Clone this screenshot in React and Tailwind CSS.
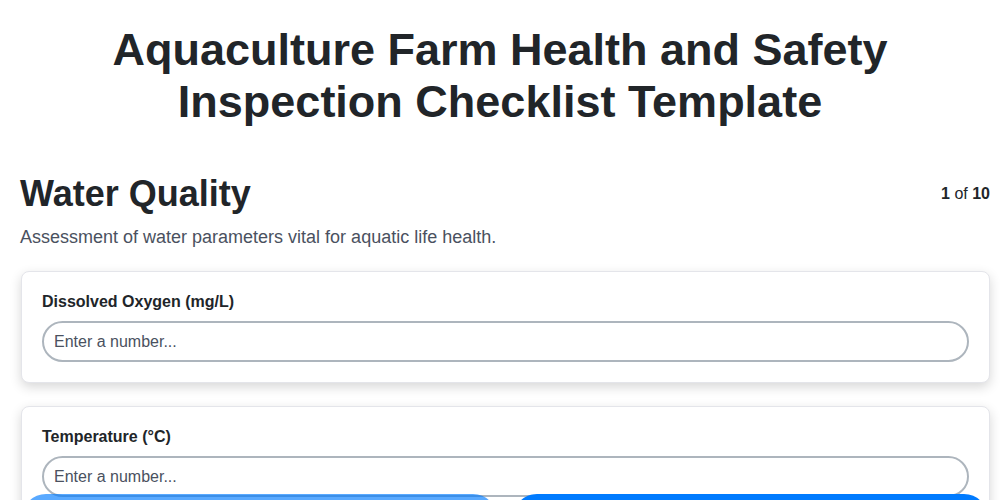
import React from "react";

const fields = [
  { label: "Dissolved Oxygen (mg/L)" },
  { label: "Temperature (°C)" },
  { label: "pH Level" },
];

export default function App() {
  return (
    <div className="h-screen overflow-y-auto [scrollbar-width:none] bg-white text-[#212529] font-['Liberation_Sans',Arial,sans-serif]">
      <h1 className="px-5 pt-6 text-center text-[45px] leading-[52px] font-bold">
        Aquaculture Farm Health and Safety Inspection Checklist Template
      </h1>

      <section className="pl-5 pr-[10px]">
        <div className="mt-[44px] flex items-center justify-between">
          <h2 className="text-[36px] leading-[43px] font-bold">Water Quality</h2>
          <div className="text-base leading-6">
            <span className="font-bold">1</span> of <span className="font-bold">10</span>
          </div>
        </div>
        <p className="mt-[9px] text-lg leading-[27px] text-[#4a5160]">
          Assessment of water parameters vital for aquatic life health.
        </p>

        <div className="mt-5 flex flex-col gap-[23px] pb-24">
          {fields.map((f) => (
            <div
              key={f.label}
              className="ml-px rounded-lg border border-[#e4e5ea] bg-white px-5 pt-[18px] pb-5 shadow-[0_4px_12px_rgba(0,0,0,0.16)]"
            >
              <label className="block text-base leading-6 font-bold text-[#212529]">
                {f.label}
              </label>
              <input
                type="number"
                placeholder="Enter a number..."
                className="mt-[7px] block h-[41px] w-full rounded-full border-2 border-[#adb5bd] bg-white px-[10px] text-base text-[#212529] placeholder:text-[#4a5160] outline-none"
              />
            </div>
          ))}
        </div>
      </section>

      {/* bottom nav, sits over the page */}
      <div className="fixed left-[22px] right-[12px] top-[494px] flex gap-4">
        <button className="h-12 flex-1 rounded-full bg-[#007bff] text-base font-bold text-white opacity-65">
          Previous
        </button>
        <button className="h-12 flex-1 rounded-full bg-[#007bff] text-base font-bold text-white">
          Next
        </button>
      </div>
    </div>
  );
}
